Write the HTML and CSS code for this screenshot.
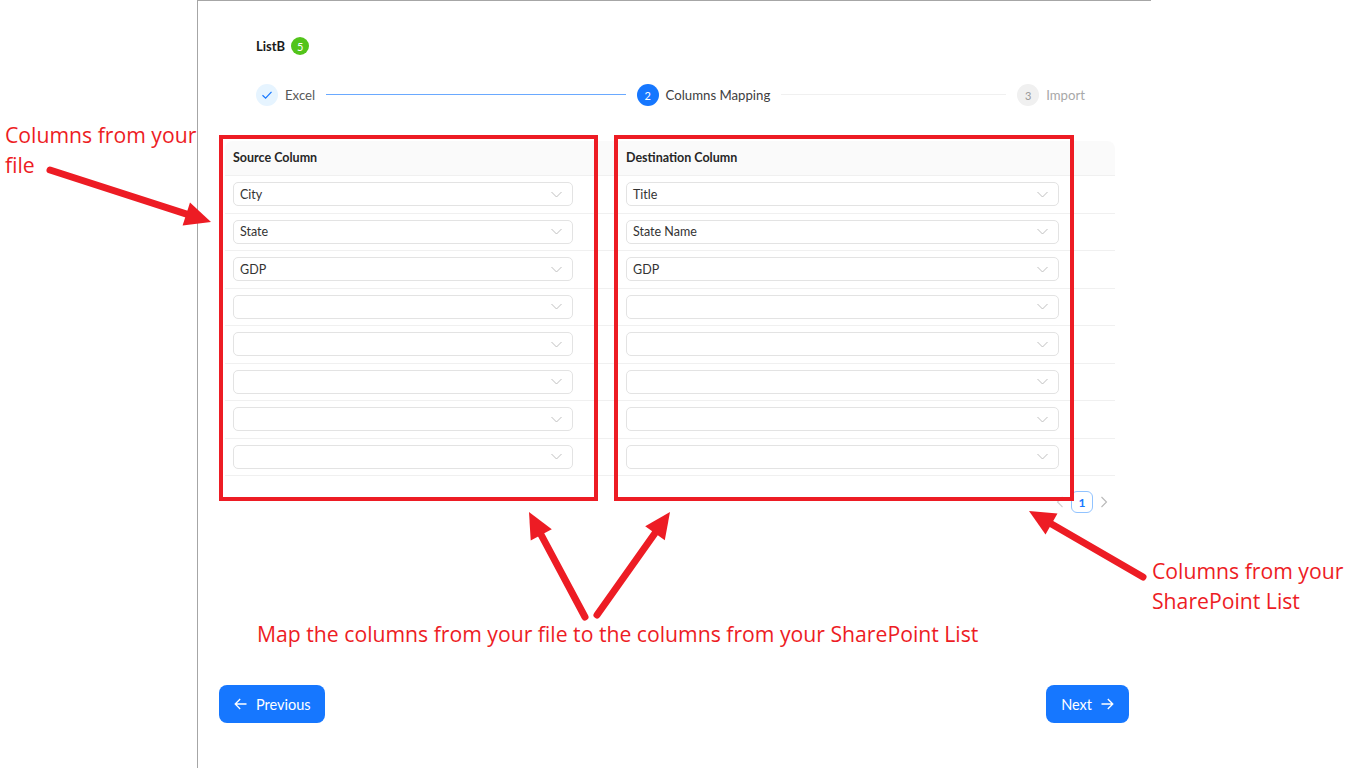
FILE: index.html
```html
<!DOCTYPE html>
<html lang="en">
<head>
<meta charset="utf-8">
<title>Columns Mapping</title>
<link rel="stylesheet" href="styles.css">
</head>
<body>
<div class="page">
  <div class="panel">
    <div class="title">ListB <span class="badge">5</span></div>

    <div class="steps">
      <div class="step done">
        <span class="step-icon"><svg width="12" height="12" viewBox="0 0 12 12"><path d="M1.5 6.2 L4.6 9.2 L10.5 2.8" fill="none" stroke="#1677ff" stroke-width="1.2"/></svg></span>
        <span class="step-title">Excel</span>
        <span class="step-line"></span>
      </div>
      <div class="step active">
        <span class="step-icon">2</span>
        <span class="step-title">Columns Mapping</span>
        <span class="step-line"></span>
      </div>
      <div class="step wait">
        <span class="step-icon">3</span>
        <span class="step-title">Import</span>
      </div>
    </div>

    <div class="table">
      <div class="thead">
        <div class="th">Source Column</div>
        <div class="th">Destination Column</div>
        <div class="th"></div>
      </div>
      <div class="tr">
        <div class="td"><div class="select src"><span>City</span><svg class="chev" width="11" height="11" viewBox="0 0 11 11"><path d="M0.5 3 L5.5 8 L10.5 3" fill="none" stroke="#bfbfbf"/></svg></div></div>
        <div class="td"><div class="select dst"><span>Title</span><svg class="chev" width="11" height="11" viewBox="0 0 11 11"><path d="M0.5 3 L5.5 8 L10.5 3" fill="none" stroke="#bfbfbf"/></svg></div></div>
        <div class="td"></div>
      </div>
      <div class="tr">
        <div class="td"><div class="select src"><span>State</span><svg class="chev" width="11" height="11" viewBox="0 0 11 11"><path d="M0.5 3 L5.5 8 L10.5 3" fill="none" stroke="#bfbfbf"/></svg></div></div>
        <div class="td"><div class="select dst"><span>State Name</span><svg class="chev" width="11" height="11" viewBox="0 0 11 11"><path d="M0.5 3 L5.5 8 L10.5 3" fill="none" stroke="#bfbfbf"/></svg></div></div>
        <div class="td"></div>
      </div>
      <div class="tr">
        <div class="td"><div class="select src"><span>GDP</span><svg class="chev" width="11" height="11" viewBox="0 0 11 11"><path d="M0.5 3 L5.5 8 L10.5 3" fill="none" stroke="#bfbfbf"/></svg></div></div>
        <div class="td"><div class="select dst"><span>GDP</span><svg class="chev" width="11" height="11" viewBox="0 0 11 11"><path d="M0.5 3 L5.5 8 L10.5 3" fill="none" stroke="#bfbfbf"/></svg></div></div>
        <div class="td"></div>
      </div>
      <div class="tr">
        <div class="td"><div class="select src"><span></span><svg class="chev" width="11" height="11" viewBox="0 0 11 11"><path d="M0.5 3 L5.5 8 L10.5 3" fill="none" stroke="#bfbfbf"/></svg></div></div>
        <div class="td"><div class="select dst"><span></span><svg class="chev" width="11" height="11" viewBox="0 0 11 11"><path d="M0.5 3 L5.5 8 L10.5 3" fill="none" stroke="#bfbfbf"/></svg></div></div>
        <div class="td"></div>
      </div>
      <div class="tr">
        <div class="td"><div class="select src"><span></span><svg class="chev" width="11" height="11" viewBox="0 0 11 11"><path d="M0.5 3 L5.5 8 L10.5 3" fill="none" stroke="#bfbfbf"/></svg></div></div>
        <div class="td"><div class="select dst"><span></span><svg class="chev" width="11" height="11" viewBox="0 0 11 11"><path d="M0.5 3 L5.5 8 L10.5 3" fill="none" stroke="#bfbfbf"/></svg></div></div>
        <div class="td"></div>
      </div>
      <div class="tr">
        <div class="td"><div class="select src"><span></span><svg class="chev" width="11" height="11" viewBox="0 0 11 11"><path d="M0.5 3 L5.5 8 L10.5 3" fill="none" stroke="#bfbfbf"/></svg></div></div>
        <div class="td"><div class="select dst"><span></span><svg class="chev" width="11" height="11" viewBox="0 0 11 11"><path d="M0.5 3 L5.5 8 L10.5 3" fill="none" stroke="#bfbfbf"/></svg></div></div>
        <div class="td"></div>
      </div>
      <div class="tr">
        <div class="td"><div class="select src"><span></span><svg class="chev" width="11" height="11" viewBox="0 0 11 11"><path d="M0.5 3 L5.5 8 L10.5 3" fill="none" stroke="#bfbfbf"/></svg></div></div>
        <div class="td"><div class="select dst"><span></span><svg class="chev" width="11" height="11" viewBox="0 0 11 11"><path d="M0.5 3 L5.5 8 L10.5 3" fill="none" stroke="#bfbfbf"/></svg></div></div>
        <div class="td"></div>
      </div>
      <div class="tr">
        <div class="td"><div class="select src"><span></span><svg class="chev" width="11" height="11" viewBox="0 0 11 11"><path d="M0.5 3 L5.5 8 L10.5 3" fill="none" stroke="#bfbfbf"/></svg></div></div>
        <div class="td"><div class="select dst"><span></span><svg class="chev" width="11" height="11" viewBox="0 0 11 11"><path d="M0.5 3 L5.5 8 L10.5 3" fill="none" stroke="#bfbfbf"/></svg></div></div>
        <div class="td"></div>
      </div>
    </div>

    <div class="pager">
      <span class="pg-arrow"><svg width="8" height="12" viewBox="0 0 8 12"><path d="M6.5 1 L1.5 6 L6.5 11" fill="none" stroke="#d0d0d0" stroke-width="1.1"/></svg></span>
      <span class="pg-item">1</span>
      <span class="pg-arrow"><svg width="8" height="12" viewBox="0 0 8 12"><path d="M1.5 1 L6.5 6 L1.5 11" fill="none" stroke="#b8b8b8" stroke-width="1.1"/></svg></span>
    </div>

    <div class="actions">
      <button class="btn btn-prev"><svg width="13" height="12" viewBox="0 0 13 12"><path d="M12.5 6 H1.2 M6.2 1 L1.2 6 L6.2 11" fill="none" stroke="#fff" stroke-width="1.3"/></svg><span>Previous</span></button>
      <button class="btn btn-next"><span>Next</span><svg width="13" height="12" viewBox="0 0 13 12"><path d="M0.5 6 H11.8 M6.8 1 L11.8 6 L6.8 11" fill="none" stroke="#fff" stroke-width="1.3"/></svg></button>
    </div>
  </div>

  <div class="callout box-src"></div>
  <div class="callout box-dst"></div>

  <div class="note note-left">Columns from your<br>file</div>
  <div class="note note-right">Columns from your<br>SharePoint List</div>
  <div class="note note-bottom">Map the columns from your file to the columns from your SharePoint List</div>

  <svg class="arrows" width="1366" height="768" viewBox="0 0 1366 768">
    <g stroke="#ed1c24" stroke-width="7" stroke-linecap="round" fill="none">
      <line x1="50" y1="170" x2="188.2" y2="214.6"/>
      <line x1="585" y1="617" x2="539.8" y2="532.3"/>
      <line x1="597" y1="615" x2="656.7" y2="530.8"/>
      <line x1="1143" y1="577" x2="1048.9" y2="522.5"/>
    </g>
    <g fill="#ed1c24">
      <polygon points="211,222 182.6,225.4 190,202.6"/>
      <polygon points="529,512 551.8,529.3 530.7,540.6"/>
      <polygon points="670,512 664.8,540.2 645.2,526.3"/>
      <polygon points="1029,511 1057.5,513.6 1045.5,534.4"/>
    </g>
  </svg>
</div>
</body>
</html>
```

FILE: styles.css
```css
* { box-sizing: border-box; }

html, body {
  margin: 0;
  padding: 0;
  background: #ffffff;
}

body {
  font-family: "Lato", "Open Sans", sans-serif;
  color: rgba(0, 0, 0, 0.88);
}

.page {
  position: relative;
  width: 1366px;
  height: 768px;
  overflow: hidden;
}

.panel {
  margin-left: 197px;
  width: 954px;
  height: 768px;
  border-left: 1px solid #a6a6a6;
  border-top: 1px solid #a6a6a6;
  display: flex;
  flex-direction: column;
}

/* title */
.title {
  margin: 35px 0 0 58px;
  height: 20px;
  display: flex;
  align-items: center;
  gap: 6px;
  font-size: 13px;
  font-weight: 700;
  color: #1a1a1a;
}

.badge {
  width: 18px;
  height: 18px;
  border-radius: 50%;
  background: #52c41a;
  color: #fff;
  font-size: 11px;
  font-weight: 400;
  display: flex;
  align-items: center;
  justify-content: center;
}

/* steps */
.steps {
  margin: 28px 0 0 58px;
  width: 829px;
  height: 22px;
  display: flex;
  align-items: center;
}

.step {
  display: flex;
  align-items: center;
  flex: 1;
}

.step.wait {
  flex: 0 0 auto;
}

.step-icon {
  width: 22px;
  height: 22px;
  border-radius: 50%;
  display: flex;
  align-items: center;
  justify-content: center;
  font-size: 11px;
  flex: 0 0 auto;
}

.step-title {
  margin-left: 7px;
  font-size: 13.2px;
  white-space: nowrap;
}

.step-line {
  flex: 1;
  height: 2px;
  margin: 0 11px;
  border-top: 1px solid transparent;
}

.done .step-icon { background: #e6f4ff; }
.done .step-title { color: #595959; }
.done .step-line { border-top-color: #6aa9ff; }

.active .step-icon { background: #1677ff; color: #fff; }
.active .step-title { color: #404040; }
.active .step-line { border-top-color: #f0f0f0; }

.wait .step-icon { background: #f0f0f0; color: #9a9a9a; }
.wait .step-title { color: #a8a8a8; }

/* table */
.table {
  margin: 35px 0 0 27px;
  width: 890px;
}

.thead,
.tr {
  display: grid;
  grid-template-columns: 393px 449px 48px;
}

.thead {
  height: 35px;
  background: #fafafa;
  border-radius: 8px 8px 0 0;
  border-bottom: 1px solid #f0f0f0;
}

.th {
  padding: 0 8px 1px;
  display: flex;
  align-items: center;
  font-size: 12.5px;
  font-weight: 700;
  color: #262626;
}

.tr {
  height: 37.5px;
  border-bottom: 1px solid #f0f0f0;
}

.td {
  padding: 0 8px;
  display: flex;
  align-items: center;
}

.select {
  height: 24px;
  border: 1px solid #e3e3e3;
  border-radius: 5px;
  display: flex;
  align-items: center;
  justify-content: space-between;
  padding: 0 10px 0 6px;
  font-size: 12.5px;
  color: #333;
  background: #fff;
}

.select.src { width: 340px; }
.select.dst { width: 433px; }

.chev { flex: 0 0 auto; }

/* pager */
.pager {
  margin: 15px 40px 0 0;
  align-self: flex-end;
  display: flex;
  align-items: center;
  gap: 4px;
  height: 22px;
}

.pg-arrow {
  width: 14px;
  height: 22px;
  display: flex;
  align-items: center;
  justify-content: center;
}

.pg-item {
  width: 22px;
  height: 22px;
  border: 1px solid #91c3ff;
  border-radius: 6px;
  color: #1677ff;
  font-size: 12px;
  font-weight: 700;
  display: flex;
  align-items: center;
  justify-content: center;
}

/* buttons */
.actions {
  margin: 172px 22px 0 21px;
  display: flex;
  justify-content: space-between;
}

.btn {
  height: 38px;
  border: none;
  border-radius: 8px;
  background: #1677ff;
  color: #fff;
  font-family: "Lato", "Open Sans", sans-serif;
  font-size: 14.5px;
  display: flex;
  align-items: center;
  gap: 9px;
}

.btn-prev { padding: 0 14px 0 15px; }
.btn-next { padding: 0 15px 0 15px; }

/* annotations */
.callout {
  position: absolute;
  border: 4px solid #ed1c24;
}

.box-src {
  left: 219px;
  top: 135px;
  width: 379px;
  height: 366px;
}

.box-dst {
  left: 614px;
  top: 135px;
  width: 460px;
  height: 366px;
}

.note {
  position: absolute;
  font-family: "Open Sans", sans-serif;
  font-size: 21.2px;
  line-height: 30px;
  color: #ed1c24;
  white-space: nowrap;
}

.note-left { left: 5px; top: 120px; }
.note-right { left: 1152px; top: 556px; }
.note-bottom { left: 257px; top: 619px; }

.arrows {
  position: absolute;
  left: 0;
  top: 0;
  pointer-events: none;
}
```
